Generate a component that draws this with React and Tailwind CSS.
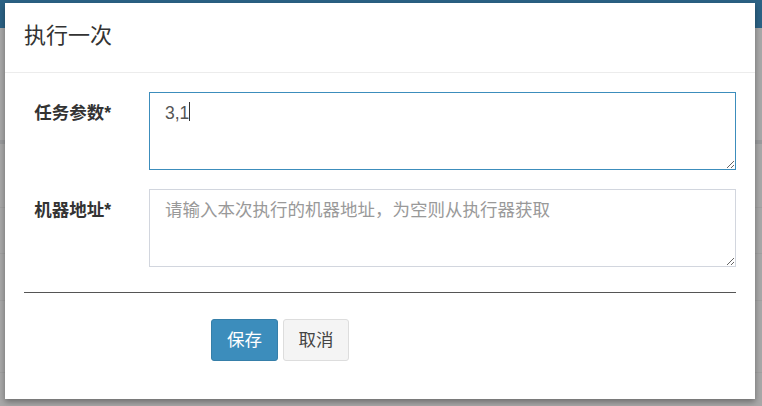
import React from "react";

const font = { fontFamily: '"Liberation Sans", "Noto Sans CJK SC", sans-serif' };

function Backdrop() {
  return (
    <div className="flex h-[406px] w-[762px] flex-col bg-[#a8a8a8]">
      <div className="h-[28px] bg-[#2b6285]" />
      <div className="h-[112px]" />
      <div className="h-[4px] bg-[#999a9c]" />
      <div className="h-[63px]" />
      <div className="h-px bg-[#a0a0a0]" />
      <div className="h-[45px]" />
      <div className="h-px bg-[#a0a0a0]" />
      <div className="h-[46px]" />
      <div className="h-px bg-[#a0a0a0]" />
      <div className="h-[71px]" />
      <div className="h-px bg-[#a0a0a0]" />
    </div>
  );
}

function Field({ label, children }) {
  return (
    <div className="flex">
      <label className="w-[125px] shrink-0 pr-[19px] pt-[9px] text-right text-[17.5px] font-bold leading-[25px] text-[#333]">
        {label}
      </label>
      <div className="relative flex-1 px-[19px]">{children}</div>
    </div>
  );
}

export default function App() {
  return (
    <div className="relative h-[406px] w-[762px] overflow-hidden" style={font}>
      <Backdrop />
      <div className="absolute left-[5px] top-[3px] h-[396px] w-[750px] bg-white shadow-[0_3px_6px_rgba(0,0,0,0.35)]">
        <div className="flex h-[70px] items-center border-b border-[#ececec] px-[19px] pb-[4px]">
          <h4 className="text-[22px] leading-none text-[#333]">执行一次</h4>
        </div>
        <div className="flex flex-col gap-[19px] pt-[19px]">
          <Field label="任务参数*">
            <textarea
              defaultValue="3,1"
              className="block h-[78px] w-full resize-y border border-[#3c8dbc] px-[15px] py-[8px] text-[17.5px] leading-[25px] text-[#555] outline-none"
            />
            {/* text caret */}
            <span className="pointer-events-none absolute left-[59px] top-[10px] h-[19px] w-px bg-[#333]" />
          </Field>
          <Field label="机器地址*">
            <textarea
              placeholder="请输入本次执行的机器地址，为空则从执行器获取"
              className="block h-[78px] w-full resize-y border border-[#d2d6de] px-[15px] py-[8px] text-[17.5px] leading-[25px] text-[#555] outline-none placeholder:text-[#999]"
            />
          </Field>
        </div>
        <div className="mx-[19px] mt-[25px] h-px bg-[#555]" />
        <div className="mt-[26px] flex gap-[5px] pl-[206px]">
          <button className="h-[42px] w-[67px] rounded-[3px] border border-[#367fa9] bg-[#3c8dbc] text-[17.5px] text-white">
            保存
          </button>
          <button className="h-[42px] w-[66px] rounded-[3px] border border-[#ddd] bg-[#f4f4f4] text-[17.5px] text-[#444]">
            取消
          </button>
        </div>
      </div>
    </div>
  );
}
